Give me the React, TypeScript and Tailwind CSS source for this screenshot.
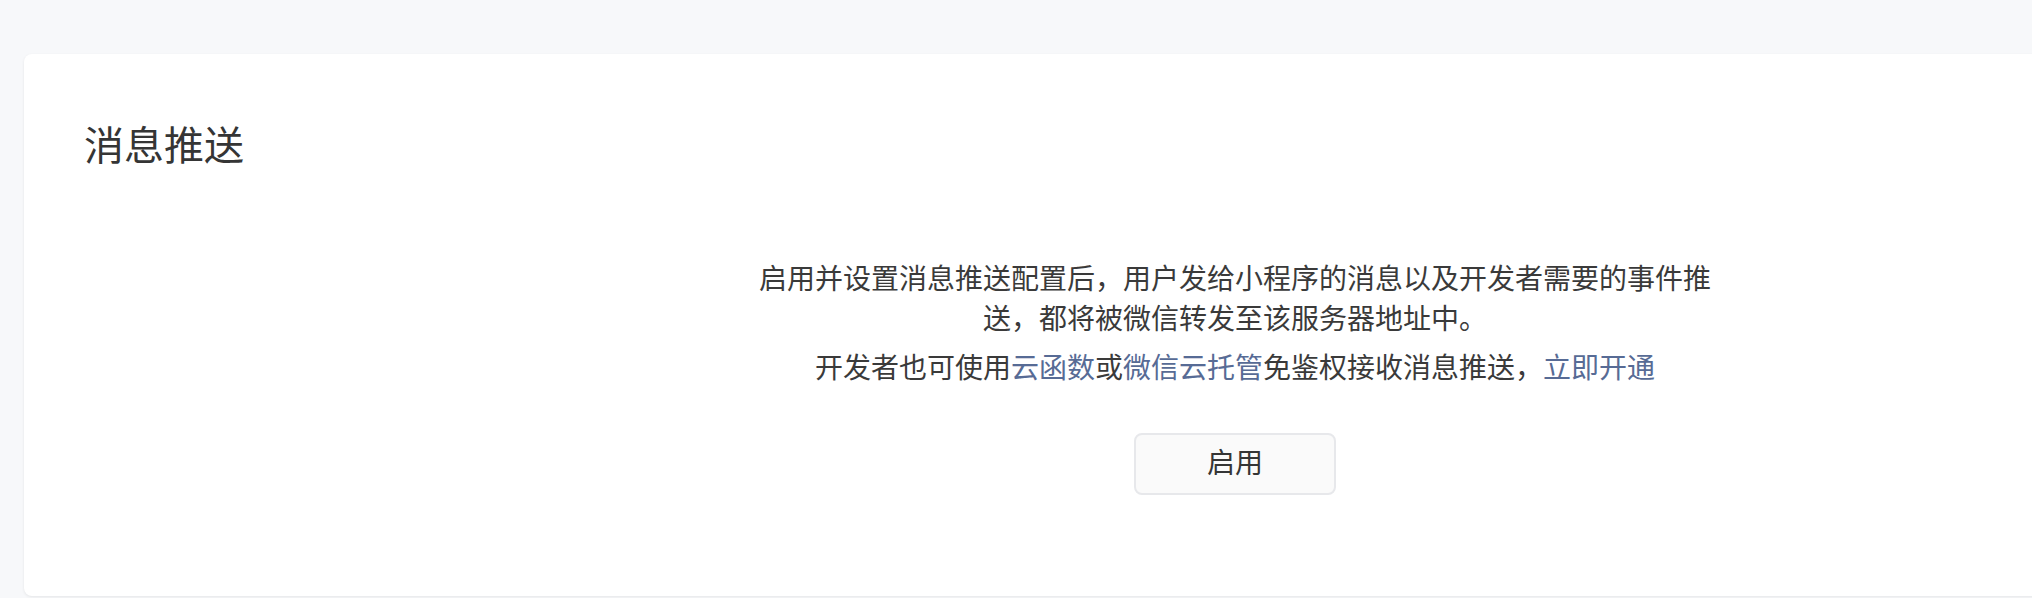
/* ── Message push settings card ── */

const FONT = "font-['Liberation_Sans','Noto_Sans_CJK_SC',sans-serif]";

export default function App() {
  return (
    <div className={`h-[598px] overflow-hidden bg-[#f7f8fa] pt-[54px] pl-[24px] ${FONT}`}>
      <div className="w-[2422px] h-[542px] rounded-lg bg-white shadow-[0_1px_3px_rgba(0,0,0,0.08)] pl-[60px] pt-[72px]">
        <h1 className="text-[40px] leading-[40px] font-normal text-[#353535]">消息推送</h1>

        {/* Empty state body */}
        <div className="mt-[94px] -ml-[60px] flex flex-col items-center">
          <div className="w-[960px] text-center text-[28px] leading-[40px] text-[#3a3a3a]">
            <p>启用并设置消息推送配置后，用户发给小程序的消息以及开发者需要的事件推送，都将被微信转发至该服务器地址中。</p>
            <p className="mt-[9px]">
              开发者也可使用
              <a className="text-[#576b95] cursor-pointer">云函数</a>
              或
              <a className="text-[#576b95] cursor-pointer">微信云托管</a>
              免鉴权接收消息推送，
              <a className="text-[#576b95] cursor-pointer">立即开通</a>
            </p>
          </div>

          <button className="mt-[44px] w-[202px] h-[62px] rounded-lg border-2 border-[#e7e8eb] bg-[#fafafa] text-[28px] text-[#353535]">
            启用
          </button>
        </div>
      </div>
    </div>
  );
}
